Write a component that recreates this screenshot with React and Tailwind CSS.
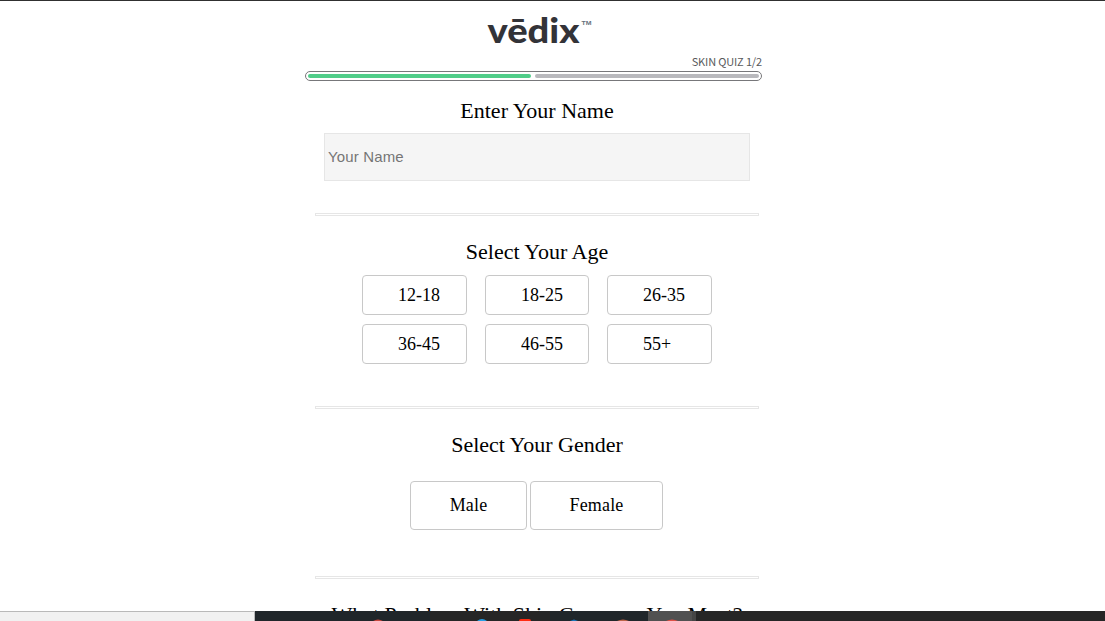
const ages = ["12-18", "18-25", "26-35", "36-45", "46-55", "55+"];

function Heading({ children }) {
  return <h2 className="h-[26px] whitespace-nowrap text-center text-[22px] leading-[26px]">{children}</h2>;
}

function Rule() {
  return <div className="h-[3px] w-[444px] shrink-0 border border-[#e6e6e6]" />;
}

function Logo() {
  return (
    <svg className="ml-[-1px] block h-[48px] w-[112px]" viewBox="0 -14 112 48" role="img">
      <text x="3.5" y="28.3" textLength="92" lengthAdjust="spacingAndGlyphs" fontSize="34" fontWeight="900" fill="#333338" fontFamily="Lato, sans-serif">vēdix</text>
      <text x="97.5" y="10" textLength="10" lengthAdjust="spacingAndGlyphs" fontSize="6" fontWeight="700" fill="#66717c" fontFamily="Liberation Sans, sans-serif">TM</text>
    </svg>
  );
}

function Taskbar() {
  return (
    <footer className="flex h-[10px] shrink-0">
      <div className="h-full w-[255px] border-r border-t border-[#b9b9b9] bg-[#f1f1f1]" />
      <svg className="h-[10px] w-[850px] bg-[#20262a]" viewBox="255 611 850 10">
        <rect x="430" y="611" width="120" height="10" fill="#262626" />
        <rect x="695" y="611" width="410" height="10" fill="#262626" />
        <rect x="648" y="611" width="44" height="10" fill="#515151" />
        <rect x="692" y="611" width="4" height="10" fill="#454545" />
        <circle cx="378" cy="628" r="8.5" fill="#c9473e" />
        <path d="M477 621q5-4 10 0z" fill="#249ee5" />
        <rect x="519" y="619" width="12" height="5" rx="2" fill="#ff2c12" />
        <path d="M570 621l4-1.5 4 1.5z" fill="#1976bb" />
        <path d="M617 621q6-3 12 0z" fill="#bd6548" />
        <path d="M666 621q6-3 12 0z" fill="#df5146" />
      </svg>
    </footer>
  );
}

export default function App() {
  return (
    <div className="flex h-[621px] w-[1105px] flex-col overflow-hidden border-t border-[#303030] bg-white font-['Liberation_Serif',serif] text-black">
      <main className="flex h-[610px] shrink-0 flex-col items-center overflow-hidden pr-[31px]">
        <div className="flex h-[54px] shrink-0 pl-[6px]"><Logo /></div>
        <div className="mr-[7px] h-[16px] w-[457px] shrink-0 text-right font-['Noto_Sans_CJK_SC',sans-serif] text-[11px] leading-[12px] tracking-[-0.15px] text-[#58595b]">SKIN QUIZ 1/2</div>
        <div className="mr-[7px] flex h-[10px] w-[457px] shrink-0 gap-[4px] rounded-full border border-[#77777a] px-[2px] py-[2px]">
          <div className="h-[4px] w-[223px] rounded-full bg-[#50cd89]" />
          <div className="h-[4px] flex-1 rounded-full bg-[#b9b9bd]" />
        </div>
        <section className="mt-[17px] flex shrink-0 flex-col items-center">
          <Heading>Enter Your Name</Heading>
          <input className="mt-[9px] h-[48px] w-[426px] border border-[#e6e6e6] bg-[#f5f5f5] px-[3px] pb-[2px] font-['Liberation_Sans',sans-serif] text-[15px] tracking-[0.15px] placeholder:text-[#757575]" placeholder="Your Name" />
        </section>
        <div className="mt-[32px] flex shrink-0"><Rule /></div>
        <section className="mt-[23px] shrink-0">
          <Heading>Select Your Age</Heading>
          <div className="mt-[10px] grid grid-cols-[105px_104px_105px] gap-x-[18px] gap-y-[9px]">
            {ages.map((age) => (
              <button key={age} className="h-[40px] rounded-[4px] border border-[#c8c8c8] pl-[35px] text-left text-[18px] leading-[36px]">{age}</button>
            ))}
          </div>
        </section>
        <div className="mt-[42px] flex shrink-0"><Rule /></div>
        <section className="mt-[23px] flex shrink-0 flex-col items-center">
          <Heading>Select Your Gender</Heading>
          <div className="mt-[23px] mr-[2px] flex gap-[3px]">
            <button className="h-[49px] w-[117px] rounded-[4px] border border-[#c8c8c8] pl-[1px] text-[18px] tracking-[0.15px]">Male</button>
            <button className="h-[49px] w-[133px] rounded-[4px] border border-[#c8c8c8] pl-[1px] text-[18px] tracking-[0.15px]">Female</button>
          </div>
        </section>
        <div className="mt-[46px] flex shrink-0"><Rule /></div>
        <section className="mt-[23px] shrink-0"><Heading>What Problem With Skin Concerns You Most?</Heading></section>
      </main>
      <Taskbar />
    </div>
  );
}
